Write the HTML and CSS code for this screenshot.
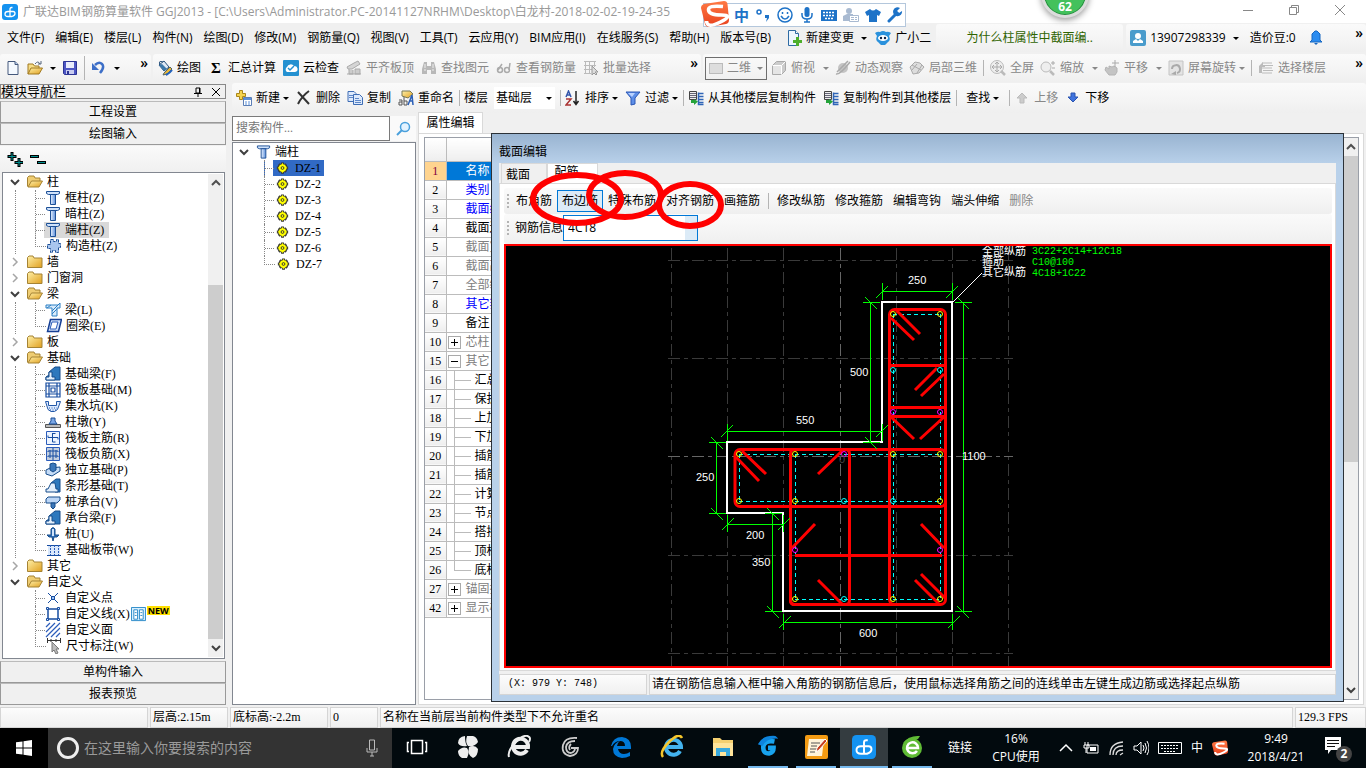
FILE: index.html
```html
<!DOCTYPE html>
<html lang="zh-CN">
<head>
  <meta charset="UTF-8">
  <meta name="viewport" content="width=device-width, initial-scale=1.0">
  <title>广联达BIM钢筋算量软件 GGJ2013</title>
  <link rel="stylesheet" href="styles.css">
</head>
<body>
  <svg class="symbols" aria-hidden="true">
    <defs>
      <linearGradient id="gold" x1="0" y1="0" x2="1" y2="1"><stop offset="0" stop-color="#fff0a8"/><stop offset="1" stop-color="#e0a020"/></linearGradient>
      <linearGradient id="steel-fill" x1="0" y1="0" x2="1" y2="0"><stop offset="0" stop-color="#eaf3ff"/><stop offset="1" stop-color="#5c8fdc"/></linearGradient>
      <linearGradient id="orange" x1="0" y1="0" x2="0" y2="1"><stop offset="0" stop-color="#ff7a45"/><stop offset="1" stop-color="#e8401c"/></linearGradient>
    </defs>
    <symbol id="app" viewBox="0 0 16 16"><rect width="16" height="16" rx="3" fill="#1492f0"/><path d="M10.500 3.500H9.500Q8 3.500 8 5v7.500M6 7.500h5q2 0 2 2t-3 3H6q-3 0-3-2.500t3-2.500" fill="none" stroke="#fff" stroke-width="1.300"/></symbol>
    <symbol id="doc" viewBox="0 0 16 16"><path d="M3 1.500h7l3 3v10H3z" fill="#f4f9ff" stroke="#44587c"/><path d="M10 1.500v3h3" fill="#b9cff0" stroke="#44587c"/></symbol>
    <symbol id="open" viewBox="0 0 16 16"><path d="M1 14V4h5l1.500 2H12v3" fill="#f6dd86" stroke="#a07820"/><path d="M1 14l3-6h11.500L12 14z" fill="url(#gold)" stroke="#a07820"/><path d="M8 4q3-4 5 0m-2 0h3V1" fill="none" stroke="#55657d"/></symbol>
    <symbol id="save" viewBox="0 0 16 16"><path d="M1.500 1.500h13v13h-12l-1-1z" fill="#4d56c4" stroke="#2c3494"/><path d="M4 2h8v6H4z" fill="#e9ecfb"/><path d="M4 10h8v4H4z" fill="#c9cdf0"/><path d="M5 11h2v3H5z" fill="#2c3494"/></symbol>
    <symbol id="undo" viewBox="0 0 16 16"><path d="M4 5q4-4 7-1t-2 9" fill="none" stroke="#3d6fc8" stroke-width="2.500"/><path d="M1 3v7h7z" fill="#3d6fc8"/></symbol>
    <symbol id="paint" viewBox="0 0 16 16"><path d="M2 5l5-4 5 6-5 4z" fill="#dfe9f5" stroke="#27507a"/><path d="M2 5l3-1 5 5-3 2z" fill="#3c78aa"/><path d="M3 5Q1 0 6 2" fill="none" stroke="#27507a"/><path d="M7 13l6-6 2 2-5 5-4 1z" fill="#e8b739" stroke="#566"/><path d="M9 15q4-2 6-5" stroke="#2463bd" stroke-width="2" fill="none"/></symbol>
    <symbol id="cloud" viewBox="0 0 16 16"><rect width="16" height="16" rx="1" fill="#2491d1"/><path d="M4 12a3 3 0 0 1 0-5 4 4 0 0 1 7-1 3 3 0 0 1 1 6z" fill="#fff"/><path d="M5 8l2 2 4-4" fill="none" stroke="#2491d1" stroke-width="1.500"/></symbol>
    <symbol id="slab" viewBox="0 0 16 16"><path d="M1 7l7-4 4-2 2 3-8 5H2z" fill="#d5d5d5" stroke="#aaa"/><path d="M3 9v5h4v-4m2 4V9h5v5zM1 14h14" fill="#ccc" stroke="#aaa"/></symbol>
    <symbol id="binoc" viewBox="0 0 16 16"><path d="M3 2h3v4h4V2h3l2 7v5h-5v-4H6v4H1V9z" fill="#b8b8b8"/><path d="M3 10h2m6 0h2M4 4v4m8-4v4" stroke="#eee"/></symbol>
    <symbol id="glasses" viewBox="0 0 16 16"><path d="M14 3l-1 7M6 4L2 10" stroke="#aaa" fill="none" stroke-width="1.500"/><circle cx="4" cy="10" r="2.500" fill="none" stroke="#aaa" stroke-width="1.500"/><circle cx="11" cy="10" r="2.500" fill="none" stroke="#aaa" stroke-width="1.500"/></symbol>
    <symbol id="batch" viewBox="0 0 16 16"><path d="M1 1.500h12M1 5.500h12M1 9.500h8M1 13.500h7M2.500 1v13M6.500 1v13M11.500 1v6" stroke="#bbb" fill="none"/><path d="M9 6v9l2-2 2 2 1-1-2-2h3z" fill="#ddd" stroke="#999"/></symbol>
    <symbol id="cube" viewBox="0 0 16 16"><path d="M1.500 5.500l4-4h9v9l-4 4h-9z" fill="#ccc" stroke="#aaa"/><path d="M1.500 5.500h9v9m0-9l4-4" fill="none" stroke="#fff"/><path d="M2 6h8v8H2z" fill="#e5e5e5"/></symbol>
    <symbol id="orbit" viewBox="0 0 16 16"><circle cx="8" cy="8" r="5" fill="#c4c4c4"/><path d="M1 14Q5 15 15 2M2 12L13 1" fill="none" stroke="#aaa" stroke-width="1.500"/></symbol>
    <symbol id="local3d" viewBox="0 0 16 16"><path d="M1 7l5-5 5 1 4 4-5 6-6 1z" fill="#ddd" stroke="#aaa"/><path d="M3 10l5-6m0 9l5-8M3 5l9 5" stroke="#aaa"/></symbol>
    <symbol id="full" viewBox="0 0 16 16"><circle cx="7" cy="7" r="6.500" fill="#eee" stroke="#bbb"/><path d="M7 2v10M2 7h10M5 4l2-2 2 2M5 10l2 2 2-2M4 5L2 7l2 2m6-4l2 2-2 2" fill="none" stroke="#aaa"/><path d="M11 11l4 4" stroke="#bbb" stroke-width="2.500"/></symbol>
    <symbol id="zoomer" viewBox="0 0 16 16"><circle cx="6" cy="7" r="5" fill="#eee" stroke="#bbb"/><path d="M10 11l4 4" stroke="#bbb" stroke-width="2.500"/><path d="M13 1v4m-2-2h4m-3 5h3" stroke="#aaa"/></symbol>
    <symbol id="hand" viewBox="0 0 16 16"><path d="M2 7l3 2V6l3 1 2-1 3 2v4l-2 3H5l-4-5z" fill="#c4c4c4" stroke="#b4b4b4"/><path d="M11 0v7M8 3h7" stroke="#aaa"/></symbol>
    <symbol id="rotate" viewBox="0 0 16 16"><path d="M1 1h14v14H1z" fill="#e4e4e4" stroke="#c4c4c4"/><path d="M4 9a4 4 0 1 1 5 4" fill="none" stroke="#aaa" stroke-width="2"/><path d="M3 14l5 1 0-4z" fill="#aaa"/></symbol>
    <symbol id="floors" viewBox="0 0 16 16"><path d="M4 3h10M5 5.500h10M4 8h10M5 10.500h10M4 13h10" stroke="#bbb"/><path d="M1 6l4-4v3h2v2H4v6H1z" fill="#bbb"/></symbol>
    <symbol id="add" viewBox="0 0 16 16"><path d="M3.500.500h3v3h3v3h-3v3h-3v-3h-3v-3h3z" fill="#f5d34e" stroke="#a9861b"/><path d="M7.500 7.500h8v8h-8z" fill="#fff" stroke="#5b7eb6"/><path d="M8 8h7v2H8z" fill="#5b8fd8"/><path d="M9 12h2m1 0h2m-5 2h2m1 0h2" stroke="#5b8fd8"/></symbol>
    <symbol id="del" viewBox="0 0 16 16"><path d="M2 2l11 12M13 1Q6 6 2 14" fill="none" stroke="#333" stroke-width="2"/></symbol>
    <symbol id="copy" viewBox="0 0 16 16"><path d="M1 1.500h6l2 2v8H1z" fill="#dce9fc" stroke="#3e6db5"/><path d="M6.500 4.500h6l3 3v7h-9z" fill="#dce9fc" stroke="#3e6db5"/><path d="M8 8.500h4M8 10.500h6M8 12.500h6M2 5.500h4M2 7.500h4" stroke="#5d87c8"/></symbol>
    <symbol id="rename" viewBox="0 0 16 16"><path d="M4 1l8 0 3 3-5 4-6-2z" fill="url(#gold)" stroke="#775"/><path d="M1 10h3v5H1v-3h3M6 7v8h3v-4H6" fill="none" stroke="#555"/><path d="M10 15l4-10 1 10m-4-4h4" fill="none" stroke="#2b5fb6" stroke-width="1.500"/></symbol>
    <symbol id="sort" viewBox="0 0 16 16"><path d="M1 7l2.500-6L6 7M2 5h3" fill="none" stroke="#3355aa" stroke-width="1.500"/><path d="M1 9h5l-5 6h5" fill="none" stroke="#a33" stroke-width="1.500"/><path d="M11 1v12M8.500 11l2.500 3.500 2.500-3.500" fill="none" stroke="#222" stroke-width="1.500"/></symbol>
    <symbol id="filter" viewBox="0 0 16 16"><path d="M1 2h14l-5 6v6l-4 1V8z" fill="#5e8fe8" stroke="#2b57b5"/><path d="M3 3h7L7 7z" fill="#b9d2ff"/></symbol>
    <symbol id="pull" viewBox="0 0 16 16"><path d="M1.500 1.500h7v8h-7z" fill="#eee" stroke="#444"/><path d="M2 3.500h6M2 5.500h6M2 7.500h6" stroke="#667"/><path d="M10.500 2.500v12h5M10.500 3.500h5m-5 3h5m-5 3h5m-5 3h5" fill="none" stroke="#2f65b7" stroke-width="1.500"/><path d="M3 10v3h3v2l4-3.500L6 9v1z" fill="#25a33a"/></symbol>
    <symbol id="up" viewBox="0 0 16 16"><path d="M8 3l5 5h-3v5H6V8H3z" fill="#ccc" stroke="#bbb"/></symbol>
    <symbol id="down" viewBox="0 0 16 16"><path d="M8 12l5-5h-3V3H6v4H3z" fill="#3f73de" stroke="#2b54b0"/></symbol>
    <symbol id="change" viewBox="0 0 16 16"><path d="M2.500.500h7l3 3v12h-10z" fill="#edf6ff" stroke="#2e6ba3"/><path d="M9.500.500v3h3" fill="#fff" stroke="#2e6ba3"/><path d="M10 7h3v3h3v3h-3v3h-3v-3H7v-3h3z" fill="#4daf2c"/></symbol>
    <symbol id="owl" viewBox="0 0 16 16"><path d="M0 3q3-2 5-1 3-2 6 0 2-1 5 1l-2 3q2 4-1 6l-3 3H6l-3-3Q0 10 2 6z" fill="#2a91dc"/><ellipse cx="8" cy="8" rx="5" ry="3" fill="#fff"/><circle cx="6" cy="8" r="1.200" fill="#124"/><circle cx="10" cy="8" r="1.200" fill="#124"/></symbol>
    <symbol id="user" viewBox="0 0 16 16"><rect width="16" height="16" rx="2" fill="#4a9ccc"/><circle cx="8" cy="6" r="3" fill="#fff"/><path d="M3 13v-2l3-2 2 2 2-2 3 2v2z" fill="#fff"/></symbol>
    <symbol id="bell" viewBox="0 0 16 16"><path d="M7 1h2l3 3v6l2 2H2l2-2V4z" fill="#2b8cf0" stroke="#1767c0"/><path d="M6 13h4l-2 2z" fill="#1767c0"/></symbol>
    <symbol id="folder" viewBox="0 0 16 16"><path d="M.500 13.500V3.500L2 2h4l1 2h8v9.500z" fill="url(#gold)" stroke="#a58334"/></symbol>
    <symbol id="folder-open" viewBox="0 0 16 16"><path d="M.500 12.500v-9L2 2h5l1 2h5v3" fill="#efcd73" stroke="#a58334"/><path d="M1 13l3.500-6h11L12 13z" fill="url(#gold)" stroke="#a58334"/></symbol>
    <symbol id="column" viewBox="0 0 16 16"><path d="M1.500 1.500h13v2l-2 1h-9l-2-1z" fill="#cfe2fb" stroke="#1c4f96"/><path d="M5.500 4.500h5v10h-5z" fill="url(#steel-fill)" stroke="#1c4f96"/></symbol>
    <symbol id="gzz" viewBox="0 0 16 16"><path d="M4.500 1.500h3v2h3v-2h2v4h2v4h-2v5h-3v-2h-3v2h-2v-4h-3v-4h3z" fill="#a9c6ef" stroke="#1c4f96" stroke-dasharray="3 1"/></symbol>
    <symbol id="beam" viewBox="0 0 16 16"><path d="M1 3h12l2-2v5h-3v8H7V6H1z" fill="#d9ebfb" stroke="#2b7fc4"/><path d="M2 6l4-3m1 6l6-6m-6 9l5-5" stroke="#2b7fc4"/></symbol>
    <symbol id="ring" viewBox="0 0 16 16"><path d="M4.500 1.500h11l-3 12h-11z" fill="#cfe0fa" stroke="#153f95" stroke-width="1.500"/><path d="M6 4h6l-2 7H4z" fill="#fff" stroke="#2c5dba"/></symbol>
    <symbol id="fbeam" viewBox="0 0 16 16"><path d="M1 14v-3l3-2V6l6-5h5v13z" fill="#2d78bd" stroke="#164c8b"/><path d="M1 14v-3h3V6h3v5h3v3z" fill="#e3effc" stroke="#164c8b"/></symbol>
    <symbol id="raft" viewBox="0 0 16 16"><path d="M1 1h14v14H1zM4 1v14M12 1v14M1 4h14M1 12h14M6 6h4v4H6z" fill="none" stroke="#164ca0" stroke-width="1.200"/></symbol>
    <symbol id="pit" viewBox="0 0 16 16"><path d="M.500 3.500h3v4h8v-4h4l-3 8-3 2H6l-3-2z" fill="#dceaff" stroke="#2358a8"/><path d="M4 10h8M5 12h6" stroke="#2358a8" stroke-dasharray="1 1.500"/></symbol>
    <symbol id="pier" viewBox="0 0 16 16"><path d="M0.500 10.500h15v3H.500z" fill="#bbb" stroke="#555"/><path d="M4 10l2-3V4h4v3l2 3z" fill="#7ba7e5" stroke="#1c4f96"/></symbol>
    <symbol id="rebar" viewBox="0 0 16 16"><path d="M1.500 1.500h13v13h-13z" fill="#edf4ff" stroke="#2c5dba"/><path d="M7.500 3v9h3M10.500 3.500h-3M3 7.500h10v2M3 7.500v-2" fill="none" stroke="#164ca0"/></symbol>
    <symbol id="rebar2" viewBox="0 0 16 16"><path d="M1.500 1.500h13v13h-13z" fill="#c4cfdf" stroke="#2c5dba"/><path d="M8 2v12M3 6V5h10v1M3 11v-1h10v1M5 4v8m6-8v8" fill="none" stroke="#164ca0"/></symbol>
    <symbol id="isolated" viewBox="0 0 16 16"><path d="M1 8l4-2 10-1v4l-8 5-6-2z" fill="#c5dcf7" stroke="#164c8b"/><path d="M5 2l3-1 3 1v6l-3 2-3-2z" fill="#3c78ba" stroke="#164c8b"/></symbol>
    <symbol id="strip" viewBox="0 0 16 16"><path d="M6 5l5-4h4v13h-5z" fill="#2d78bd" stroke="#164c8b"/><path d="M1 14v-3h2l3-6h4l1 6h2v3z" fill="#e3effc" stroke="#164c8b"/></symbol>
    <symbol id="cap" viewBox="0 0 16 16"><path d="M1 5l2-2h12v3l-3 3H1z" fill="#bcd6f6" stroke="#164c8b"/><path d="M6 9h4v4l-2 2-2-2z" fill="#3c78ba" stroke="#164c8b"/></symbol>
    <symbol id="pile" viewBox="0 0 16 16"><path d="M6 3q2-3 4 0v6h4l-2 2H9l-1 4-1-4H4L2 9h4z" fill="#2f70bb" stroke="#164c8b"/><path d="M7 3h2v7H7z" fill="#cfe3fb"/></symbol>
    <symbol id="band" viewBox="0 0 16 16"><path d="M2 3h12v10H2z" fill="#d9e8fc"/><path d="M1 3.500h14M1 13.500h14" stroke="#164ca0"/><path d="M4.500 3v10M8.500 3v10M12.500 3v10" stroke="#2c5dba" stroke-dasharray="2 1"/></symbol>
    <symbol id="cross" viewBox="0 0 16 16"><path d="M3 3l4 4 2 2 4 4M13 3L3 13" stroke="#164ca0" fill="none"/><path d="M6.500 6.500h3v3h-3z" fill="#9cc4f7" stroke="#164ca0"/></symbol>
    <symbol id="poly" viewBox="0 0 16 16"><path d="M3 3h10v10H3z" fill="none" stroke="#164ca0" stroke-width="1.500"/><path d="M1.500 1.500h2v2h-2zm11 0h2v2h-2zm-11 11h2v2h-2zm11 0h2v2h-2z" fill="#dbe9ff" stroke="#164ca0"/></symbol>
    <symbol id="hatch" viewBox="0 0 16 16"><path d="M1 5l4-4M1 10l9-9M1 15L15 1M6 15l9-9M11 15l4-4" stroke="#2c5dba" stroke-width="1.200"/></symbol>
    <symbol id="dim" viewBox="0 0 16 16"><path d="M1.500 0v5m13-5v5M2 2.500h12M5 1v3m5-3v3" stroke="#333"/><path d="M6 4v10l2-2 2 4 2-1-2-4h3z" fill="#bbb" stroke="#777"/></symbol>
    <symbol id="gear" viewBox="0 0 16 16"><path d="M8 2v12M2 8h12M4 4l8 8M12 4l-8 8" stroke="#333" stroke-width="3"/><circle cx="8" cy="8" r="4.500" fill="#ff0" stroke="#333" stroke-dasharray="2 1"/><path d="M8 3v10M3 8h10" stroke="#ff0"/><circle cx="8" cy="8" r="1.500" fill="#ff0" stroke="#333"/></symbol>
    <symbol id="lens" viewBox="0 0 16 16"><circle cx="10" cy="6" r="4.500" fill="#e4f3ff" stroke="#4aa0dc" stroke-width="1.500"/><path d="M7 9l-5 5" stroke="#4aa0dc" stroke-width="2"/></symbol>
    <symbol id="chev-down" viewBox="0 0 10 10"><path d="M1 3l4 4 4-4" fill="none" stroke="#404040" stroke-width="2"/></symbol>
    <symbol id="chev-up" viewBox="0 0 10 10"><path d="M1 7l4-4 4 4" fill="none" stroke="#505050" stroke-width="2"/></symbol>
    <symbol id="chev-right" viewBox="0 0 10 10"><path d="M3 1l4 4-4 4" fill="none" stroke="#a6a6a6" stroke-width="1.500"/></symbol>
    <symbol id="sogou" viewBox="0 0 28 28"><path d="M3 4L23 1q3 0 3.500 3L28 20q0 3-3 4L8 27q-3 0-4-3L0 8q0-3 3-4z" fill="url(#orange)"/><path d="M22 6.500Q7 5 7.500 10t13 5-1 7-14-1" fill="none" stroke="#fff" stroke-width="3.500"/></symbol>
    <symbol id="gball" viewBox="0 0 26 26"><path d="M20 7Q10 5 8 12q-1 8 6 8 5-1 5-6h-6" fill="none" stroke="#18a3ee" stroke-width="5"/><path d="M2 10Q7 0 21 1q2 1 3 3Q12 3 7 12z" fill="#0d84dc"/></symbol>
  </svg>

  <header class="titlebar">
    <svg class="icon"><use href="#app"/></svg>
    <h1>广联达BIM钢筋算量软件 GGJ2013 - [C:\Users\Administrator.PC-20141127NRHM\Desktop\白龙村-2018-02-02-19-24-35</h1>
    <div class="window-buttons">
      <button aria-label="最小化"><svg viewBox="0 0 12 12"><path d="M1 6.500h10"/></svg></button>
      <button aria-label="还原"><svg viewBox="0 0 12 12"><path d="M1.500 3.500h7v7h-7zM3.500 3V1.500h7v7H9"/></svg></button>
      <button aria-label="关闭"><svg viewBox="0 0 12 12"><path d="M1 1l10 10M11 1L1 11"/></svg></button>
    </div>
    <div class="ime-bar">
      <svg class="ime-logo"><use href="#sogou"/></svg>
      <b>中</b>
      <svg viewBox="0 0 16 16"><circle cx="4" cy="5" r="2" fill="none" stroke="#1e73c8" stroke-width="1.500"/><path d="M10 8h4v3l-3 4 1-4h-2z" fill="#1e73c8"/></svg>
      <svg viewBox="0 0 16 16"><circle cx="8" cy="8" r="7" fill="none" stroke="#1e73c8" stroke-width="1.500"/><path d="M5.500 5v2m5-2v2M4 9q4 6 8 0" fill="none" stroke="#1e73c8" stroke-width="1.500"/></svg>
      <svg viewBox="0 0 16 16"><rect x="5.500" y="0" width="5" height="10" rx="2.500" fill="#1e73c8"/><path d="M3 6v2q0 4 5 4t5-4V6M8 12v3m-3 0h6" fill="none" stroke="#1e73c8" stroke-width="1.500"/></svg>
      <svg viewBox="0 0 16 16"><path d="M0 3h16v11H0z" fill="#1e73c8"/><path d="M2 5.500h12M2 8.500h12M4 11.500h8" stroke="#fff" stroke-width="1.500" stroke-dasharray="2 1"/></svg>
      <svg viewBox="0 0 16 16"><circle cx="6" cy="4" r="3" fill="#a9bad1"/><path d="M0 14V9l4-2h6v7z" fill="#a9bad1"/><path d="M6.500 8.500h9v6h-9zM8 10.500h3m1 0h2m-6 2h3m1 0h2" fill="#fff" stroke="#a9bad1"/></svg>
      <svg viewBox="0 0 16 16"><path d="M5 2q3 3 6 0l5 3-2 4-2-1v7H4V8L2 9 0 5z" fill="#1e73c8"/></svg>
      <svg viewBox="0 0 16 16"><path d="M2 14l8-8" stroke="#1e73c8" stroke-width="3" stroke-linecap="round"/><path d="M13 1a4.500 4.500 0 1 0 2 3l-3 2-2-2z" fill="#1e73c8"/></svg>
    </div>
    <div class="ball">62</div>
  </header>

  <div class="menubar">
    <nav>
      <a href="#">文件(F)</a><a href="#">编辑(E)</a><a href="#">楼层(L)</a><a href="#">构件(N)</a><a href="#">绘图(D)</a><a href="#">修改(M)</a><a href="#">钢筋量(Q)</a><a href="#">视图(V)</a><a href="#">工具(T)</a><a href="#">云应用(Y)</a><a href="#">BIM应用(I)</a><a href="#">在线服务(S)</a><a href="#">帮助(H)</a><a href="#">版本号(B)</a>
    </nav>
    <button class="tool"><svg class="icon"><use href="#change"/></svg>新建变更<i class="caret"></i></button>
    <button class="tool"><svg class="icon"><use href="#owl"/></svg>广小二</button>
    <a class="bar tip" href="#">为什么柱属性中截面编..</a>
    <div class="bar account">
      <button class="tool"><svg class="icon"><use href="#user"/></svg>13907298339<i class="caret"></i></button>
      <span>造价豆:0</span>
      <svg class="icon"><use href="#bell"/></svg>
      <span class="more">»</span>
    </div>
  </div>

  <div class="toolbars">
    <div class="bar file-bar">
      <button class="tool" aria-label="新建"><svg class="icon"><use href="#doc"/></svg></button>
      <button class="tool" aria-label="打开"><svg class="icon"><use href="#open"/></svg><i class="caret"></i></button>
      <button class="tool" aria-label="保存"><svg class="icon"><use href="#save"/></svg></button>
      <span class="sep"></span>
      <button class="tool" aria-label="撤销"><svg class="icon"><use href="#undo"/></svg><i class="caret"></i></button>
      <span class="more">»</span>
    </div>
    <div class="bar draw-bar">
      <button class="tool"><svg class="icon"><use href="#paint"/></svg>绘图</button>
      <button class="tool"><b class="sigma">Σ</b>汇总计算</button>
      <button class="tool"><svg class="icon"><use href="#cloud"/></svg>云检查</button>
      <button class="tool off"><svg class="icon"><use href="#slab"/></svg>平齐板顶</button>
      <button class="tool off"><svg class="icon"><use href="#binoc"/></svg>查找图元</button>
      <button class="tool off"><svg class="icon"><use href="#glasses"/></svg>查看钢筋量</button>
      <button class="tool off"><svg class="icon"><use href="#batch"/></svg>批量选择</button>
      <span class="more">»</span>
    </div>
    <div class="bar view-bar">
      <button class="tool off mode"><span class="swatch"></span>二维<i class="caret"></i></button>
      <button class="tool off"><svg class="icon"><use href="#cube"/></svg>俯视<i class="caret wide"></i></button>
      <button class="tool off"><svg class="icon"><use href="#orbit"/></svg>动态观察</button>
      <button class="tool off"><svg class="icon"><use href="#local3d"/></svg>局部三维</button>
      <span class="sep"></span>
      <button class="tool off"><svg class="icon"><use href="#full"/></svg>全屏</button>
      <button class="tool off"><svg class="icon"><use href="#zoomer"/></svg>缩放<i class="caret wide"></i></button>
      <button class="tool off"><svg class="icon"><use href="#hand"/></svg>平移<i class="caret wide"></i></button>
      <button class="tool off"><svg class="icon"><use href="#rotate"/></svg>屏幕旋转<i class="caret"></i></button>
      <span class="sep"></span>
      <button class="tool off"><svg class="icon"><use href="#floors"/></svg>选择楼层</button>
      <span class="more">»</span>
    </div>
  </div>

  <main>
    <aside class="nav">
      <div class="nav-head">
        <h2>模块导航栏</h2>
        <button aria-label="固定"><svg viewBox="0 0 10 10"><path d="M3 1h4v5H3zM6.500 1v5M1 6.500h8M5 7v3" fill="none" stroke="#000"/></svg></button>
        <button aria-label="关闭"><svg viewBox="0 0 10 10"><path d="M1 1l8 8M9 1L1 9" stroke="#000"/></svg></button>
      </div>
      <button class="group">工程设置</button>
      <button class="group">绘图输入</button>
      <div class="nav-tools">
        <button aria-label="全部展开"><svg viewBox="0 0 16 16"><path d="M5 1v9M.500 5.500h9M12 7v9M7.500 11.500h9" stroke="#000" stroke-width="3"/><path d="M5 2v7M1.500 5.500h7M12 8v7M8.500 11.500h7" stroke="#009090"/></svg></button>
        <button aria-label="全部折叠"><svg viewBox="0 0 16 16"><path d="M0 5.500h9M7 11.500h9" stroke="#000" stroke-width="3"/><path d="M1 5.500h7M8 11.500h7" stroke="#009090"/></svg></button>
      </div>
      <div class="tree-box">
        <ul class="tree">
          <li><div class="node"><svg class="chev"><use href="#chev-down"/></svg><svg class="icon"><use href="#folder-open"/></svg>柱</div>
            <ul>
              <li><svg class="icon"><use href="#column"/></svg>框柱(Z)</li>
              <li><svg class="icon"><use href="#column"/></svg>暗柱(Z)</li>
              <li class="current"><svg class="icon"><use href="#column"/></svg>端柱(Z)</li>
              <li><svg class="icon"><use href="#gzz"/></svg>构造柱(Z)</li>
            </ul>
          </li>
          <li><div class="node"><svg class="chev"><use href="#chev-right"/></svg><svg class="icon"><use href="#folder"/></svg>墙</div></li>
          <li><div class="node"><svg class="chev"><use href="#chev-right"/></svg><svg class="icon"><use href="#folder"/></svg>门窗洞</div></li>
          <li><div class="node"><svg class="chev"><use href="#chev-down"/></svg><svg class="icon"><use href="#folder-open"/></svg>梁</div>
            <ul>
              <li><svg class="icon"><use href="#beam"/></svg>梁(L)</li>
              <li><svg class="icon"><use href="#ring"/></svg>圈梁(E)</li>
            </ul>
          </li>
          <li><div class="node"><svg class="chev"><use href="#chev-right"/></svg><svg class="icon"><use href="#folder"/></svg>板</div></li>
          <li><div class="node"><svg class="chev"><use href="#chev-down"/></svg><svg class="icon"><use href="#folder-open"/></svg>基础</div>
            <ul>
              <li><svg class="icon"><use href="#fbeam"/></svg>基础梁(F)</li>
              <li><svg class="icon"><use href="#raft"/></svg>筏板基础(M)</li>
              <li><svg class="icon"><use href="#pit"/></svg>集水坑(K)</li>
              <li><svg class="icon"><use href="#pier"/></svg>柱墩(Y)</li>
              <li><svg class="icon"><use href="#rebar"/></svg>筏板主筋(R)</li>
              <li><svg class="icon"><use href="#rebar2"/></svg>筏板负筋(X)</li>
              <li><svg class="icon"><use href="#isolated"/></svg>独立基础(P)</li>
              <li><svg class="icon"><use href="#strip"/></svg>条形基础(T)</li>
              <li><svg class="icon"><use href="#cap"/></svg>桩承台(V)</li>
              <li><svg class="icon"><use href="#fbeam"/></svg>承台梁(F)</li>
              <li><svg class="icon"><use href="#pile"/></svg>桩(U)</li>
              <li><svg class="icon"><use href="#band"/></svg>基础板带(W)</li>
            </ul>
          </li>
          <li><div class="node"><svg class="chev"><use href="#chev-right"/></svg><svg class="icon"><use href="#folder"/></svg>其它</div></li>
          <li><div class="node"><svg class="chev"><use href="#chev-down"/></svg><svg class="icon"><use href="#folder-open"/></svg>自定义</div>
            <ul class="last">
              <li><svg class="icon"><use href="#cross"/></svg>自定义点</li>
              <li><svg class="icon"><use href="#poly"/></svg>自定义线(X)<svg class="video" viewBox="0 0 16 16"><path d="M.500.500h15v14H.500z" fill="#d8f0ff" stroke="#2787c8"/><path d="M3 3h4v10H3zm6 0h4v10H9z" fill="#fff" stroke="#2787c8"/><path d="M4 6h2m-2 3h2m4-3h2m-2 3h2" stroke="#2787c8"/></svg><b class="new">NEW</b></li>
              <li><svg class="icon"><use href="#hatch"/></svg>自定义面</li>
              <li><svg class="icon"><use href="#dim"/></svg>尺寸标注(W)</li>
            </ul>
          </li>
        </ul>
        <div class="scroll nav-scroll"><svg><use href="#chev-up"/></svg><div class="thumb"></div><svg><use href="#chev-down"/></svg></div>
      </div>
      <button class="group">单构件输入</button>
      <button class="group">报表预览</button>
    </aside>

    <section class="work">
      <div class="bar edit-bar">
        <button class="tool"><svg class="icon"><use href="#add"/></svg>新建<i class="caret"></i></button>
        <button class="tool"><svg class="icon"><use href="#del"/></svg>删除</button>
        <button class="tool"><svg class="icon"><use href="#copy"/></svg>复制</button>
        <button class="tool"><svg class="icon"><use href="#rename"/></svg>重命名</button>
        <span class="sep"></span>
        <label class="floor">楼层<select><option>基础层</option></select><i class="caret"></i></label>
        <span class="sep"></span>
        <button class="tool"><svg class="icon"><use href="#sort"/></svg>排序<i class="caret"></i></button>
        <button class="tool"><svg class="icon"><use href="#filter"/></svg>过滤<i class="caret"></i></button>
        <span class="sep"></span>
        <button class="tool"><svg class="icon"><use href="#pull"/></svg>从其他楼层复制构件</button>
        <button class="tool"><svg class="icon"><use href="#pull"/></svg>复制构件到其他楼层</button>
        <span class="sep"></span>
        <button class="tool find">查找<i class="caret"></i></button>
        <span class="sep"></span>
        <button class="tool off"><svg class="icon"><use href="#up"/></svg>上移</button>
        <button class="tool"><svg class="icon"><use href="#down"/></svg>下移</button>
      </div>

      <div class="panes">
        <div class="members">
          <div class="search">
            <input type="text" placeholder="搜索构件..." aria-label="搜索构件">
            <button aria-label="搜索"><svg class="icon"><use href="#lens"/></svg></button>
          </div>
          <ul class="tree member-tree">
            <li><div class="node"><svg class="chev"><use href="#chev-down"/></svg><svg class="icon"><use href="#column"/></svg>端柱</div>
              <ul class="last">
                <li class="picked"><svg class="icon"><use href="#gear"/></svg>DZ-1</li>
                <li><svg class="icon"><use href="#gear"/></svg>DZ-2</li>
                <li><svg class="icon"><use href="#gear"/></svg>DZ-3</li>
                <li><svg class="icon"><use href="#gear"/></svg>DZ-4</li>
                <li><svg class="icon"><use href="#gear"/></svg>DZ-5</li>
                <li><svg class="icon"><use href="#gear"/></svg>DZ-6</li>
                <li><svg class="icon"><use href="#gear"/></svg>DZ-7</li>
              </ul>
            </li>
          </ul>
        </div>

        <div class="props">
          <button class="prop-tab">属性编辑</button>
          <div class="prop-page">
            <div class="prop-box">
              <table>
                <colgroup><col class="num-col"><col></colgroup>
                <thead><tr><th></th><td></td></tr></thead>
                <tbody>
                  <tr class="active"><th>1</th><td>名称</td></tr>
                  <tr class="key"><th>2</th><td>类别</td></tr>
                  <tr class="key"><th>3</th><td>截面编</td></tr>
                  <tr><th>4</th><td>截面边</td></tr>
                  <tr class="dim"><th>5</th><td>截面宽</td></tr>
                  <tr class="dim"><th>6</th><td>截面高</td></tr>
                  <tr class="dim"><th>7</th><td>全部纵</td></tr>
                  <tr class="key"><th>8</th><td>其它箍</td></tr>
                  <tr><th>9</th><td>备注</td></tr>
                  <tr class="dim head"><th>10</th><td><button aria-label="展开"><svg viewBox="0 0 11 11"><path d="M2 5.500h7M5.500 2v7"/></svg></button>芯柱</td></tr>
                  <tr class="dim head"><th>15</th><td><button aria-label="折叠"><svg viewBox="0 0 11 11"><path d="M2 5.500h7"/></svg></button>其它</td></tr>
                  <tr class="sub"><th>16</th><td>汇总</td></tr>
                  <tr class="sub"><th>17</th><td>保护</td></tr>
                  <tr class="sub"><th>18</th><td>上加</td></tr>
                  <tr class="sub"><th>19</th><td>下加</td></tr>
                  <tr class="sub"><th>20</th><td>插筋</td></tr>
                  <tr class="sub"><th>21</th><td>插筋</td></tr>
                  <tr class="sub"><th>22</th><td>计算</td></tr>
                  <tr class="sub"><th>23</th><td>节点</td></tr>
                  <tr class="sub"><th>24</th><td>搭接</td></tr>
                  <tr class="sub"><th>25</th><td>顶标</td></tr>
                  <tr class="sub end"><th>26</th><td>底标</td></tr>
                  <tr class="dim head"><th>27</th><td><button aria-label="展开"><svg viewBox="0 0 11 11"><path d="M2 5.500h7M5.500 2v7"/></svg></button>锚固搭</td></tr>
                  <tr class="dim head"><th>42</th><td><button aria-label="展开"><svg viewBox="0 0 11 11"><path d="M2 5.500h7M5.500 2v7"/></svg></button>显示样</td></tr>
                </tbody>
              </table>
              <div class="scroll prop-scroll"><svg><use href="#chev-up"/></svg><div class="thumb"></div><svg><use href="#chev-down"/></svg></div>
            </div>
          </div>

          <div class="dialog" role="dialog" aria-label="截面编辑">
            <h2>截面编辑</h2>
            <div class="dialog-body">
              <div class="tabs"><button>截面</button><button class="on">配筋</button></div>
              <div class="page">
                <div class="bar steel-bar">
                  <span class="grip"></span>
                  <button>布角筋</button><button class="on">布边筋</button><button>特殊布筋</button><button>对齐钢筋</button><button>画箍筋</button>
                  <span class="sep"></span>
                  <button>修改纵筋</button><button>修改箍筋</button><button>编辑弯钩</button><button>端头伸缩</button><button disabled>删除</button>
                </div>
                <div class="bar info-bar">
                  <span class="grip"></span>
                  <label for="steel">钢筋信息</label>
                  <select id="steel"><option>4C18</option></select>
                </div>
                <div class="canvas">
                  <svg viewBox="506 246 824 420">
                    <g class="grid">
                      <path d="M671.500 248V666M727.500 248V666M783.500 248V666M896.500 248V666M952.500 248V666M1008.500 248V666M668 260.500H1013M668 358.500H1013M668 555.500H1013M668 653.500H1013"/>
                      <path class="axis" d="M840.500 248V666M668 456.500H1013"/>
                    </g>
                    <path class="outline" d="M882 302H952V611H783V513H727V442H882z"/>
                    <path class="dash" d="M893.500 314V599M940.500 314V599M893 314.500H940M739 454.500H940M739 501.500H940M739.500 454V501M795.500 454V599M795 599.500H940"/>
                    <g class="stirrup">
                      <rect x="889.500" y="309.500" width="56" height="295" rx="5"/>
                      <rect x="735" y="449.500" width="210.500" height="57" rx="5"/>
                      <rect x="790.500" y="449.500" width="59" height="155" rx="4"/>
                      <path d="M790.500 555.500V600q0 4.500 4 4.500H941M795 555.500H942M891 365.500H944M891 407.500H944M891 416.500H944"/>
                      <path d="M891 318l23 22M896 310l24 24M937 368l-22 22M944 374l-23 22M891 417l23 22M944 417l-24 22M736 457l23 24M742 451l24 23M842 451l-24 23M792 548l23-24M944 548l-23-24M818 580l24 24M915 580l24 24M921 574l24 24"/>
                    </g>
                    <g class="bars">
                      <g stroke="#ff0"><circle cx="893" cy="314" r="2.500"/><circle cx="940" cy="314" r="2.500"/><circle cx="739" cy="454" r="2.500"/><circle cx="795" cy="454" r="2.500"/><circle cx="893" cy="454" r="2.500"/><circle cx="940" cy="454" r="2.500"/><circle cx="739" cy="501" r="2.500"/><circle cx="795" cy="501" r="2.500"/><circle cx="940" cy="501" r="2.500"/><circle cx="795" cy="599" r="2.500"/><circle cx="893" cy="599" r="2.500"/><circle cx="940" cy="599" r="2.500"/></g>
                      <g stroke="#0ff"><circle cx="893" cy="370" r="2.500"/><circle cx="940" cy="370" r="2.500"/><circle cx="844" cy="501" r="2.500"/><circle cx="893" cy="501" r="2.500"/><circle cx="844" cy="599" r="2.500"/></g>
                      <g stroke="#f0f"><circle cx="893" cy="412" r="2.500"/><circle cx="940" cy="412" r="2.500"/><circle cx="844" cy="454" r="2.500"/><circle cx="795" cy="550" r="2.500"/><circle cx="940" cy="550" r="2.500"/></g>
                    </g>
                    <g class="dims">
                      <path d="M882.500 291.500H952.500M882.500 283v17M952.500 283v17M876 298l12-12M946 298l12-12"/>
                      <path d="M870.500 302.500V442.500M863 302.500h17M863 442.500h17M865 297l12 12M865 437l12 12"/>
                      <path d="M963.500 302.500V611.500M955 302.500h17M955 611.500h17M957 297l12 12M957 606l12 12"/>
                      <path d="M727.500 431.500H882.500M727.500 424v17M882.500 424v17M721 437l12-12M876 437l12-12"/>
                      <path d="M716.500 442.500V513.500M709 442.500h17M709 513.500h17M711 437l12 12M711 508l12 12"/>
                      <path d="M727.500 524.500H783.500M727.500 515v17M783.500 515v17M722 530l12-12M778 530l12-12"/>
                      <path d="M772.500 513.500V611.500M765 513.500h17M765 611.500h17M767 508l12 12M767 606l12 12"/>
                      <path d="M783.500 622.500H952.500M783.500 614v16M952.500 614v16M779 628l12-12M948 628l12-12"/>
                    </g>
                    <path d="M953 302l29-29" stroke="#fff"/>
                    <g class="nums">
                      <text x="908" y="284">250</text><text x="850" y="376">500</text><text x="796" y="424">550</text><text x="696" y="481">250</text>
                      <text x="746" y="539">200</text><text x="752" y="566">350</text><text x="859" y="637">600</text><text x="962" y="460">1100</text>
                      <text class="zero" x="839" y="463">0</text>
                      <text x="982" y="255">全部纵筋</text><text x="982" y="265">箍筋</text><text x="982" y="276">其它纵筋</text>
                    </g>
                    <g class="spec"><text x="1032" y="254">3C22+2C14+12C18</text><text x="1032" y="265">C10@100</text><text x="1032" y="276">4C18+1C22</text></g>
                  </svg>
                </div>
              </div>
              <div class="dialog-status"><span>(X: 979 Y: 748)</span><span>请在钢筋信息输入框中输入角筋的钢筋信息后，使用鼠标选择角筋之间的连线单击左键生成边筋或选择起点纵筋</span></div>
            </div>
            <svg class="marks" viewBox="491 133 240 110"><ellipse cx="577" cy="199" rx="44" ry="24"/><ellipse cx="625" cy="195" rx="36" ry="22"/><ellipse cx="690" cy="205" rx="31" ry="21"/></svg>
          </div>
        </div>
      </div>
    </section>
  </main>

  <div class="statusbar"><span></span><span>层高:2.15m</span><span>底标高:-2.2m</span><span>0</span><span>名称在当前层当前构件类型下不允许重名</span><span>129.3 FPS</span></div>

  <footer class="taskbar">
    <button class="start" aria-label="开始"><svg viewBox="0 0 16 16"><path d="M0 2.300l6.500-.900v6.100H0zM7.500 1.200L16 0v7.500H7.500zM0 8.500h6.500v6.100L0 13.700zM7.500 8.500H16V16l-8.500-1.200z" fill="#fff"/></svg></button>
    <div class="cortana"><span class="circle"></span><input type="text" placeholder="在这里输入你要搜索的内容" aria-label="搜索"><svg viewBox="0 0 16 18"><path d="M5.500 1h5v10h-5zM3 9v4h10V9M8 13v4m-2 0h4" fill="none" stroke="#bbb"/></svg></div>
    <button class="task" aria-label="任务视图"><svg viewBox="0 0 24 24"><path d="M6.500 5.500h11v13h-11zM4 7.500H2.500v9H4M20 7.500h1.500v9H20" fill="none" stroke="#fff" stroke-width="1.500"/></svg></button>
    <button class="task" aria-label="风车"><svg viewBox="0 0 24 24"><path d="M12 11Q9 7 11 1h6q4 1 5 6-3 5-10 4zM13 12q6-3 9 2 0 7-5 9-6-3-4-11zM11 13q3 4 0 10H6q-4-2-4-7 4-5 9-3zM11 11Q4 12 2 8q0-6 7-7 0 7 2 10z" fill="#eee"/></svg></button>
    <button class="task" aria-label="浏览器"><svg viewBox="0 0 24 24"><path d="M20 15a7.500 7.500 0 1 1 1-3H6" fill="none" stroke="#eee" stroke-width="4"/><path d="M2 22Q0 16 9 7T22 2q2 1 0 5" fill="none" stroke="#eee" stroke-width="2"/></svg></button>
    <button class="task" aria-label="GG"><svg viewBox="0 0 24 24"><path d="M19 3Q7 2 5 10q-2 9 7 11 8-1 8-8h-7m4-7Q9 6 8 12q0 6 5 6 4-1 4-5M13 9q-3 3-1 6" fill="none" stroke="#ccc" stroke-width="1.800"/></svg></button>
    <button class="task" aria-label="Edge"><svg viewBox="0 0 24 24"><path d="M2 11Q4 2 13 2q9 1 9 10v2H9q1 5 6 5 3 0 6-2v4q-4 2-8 2-9-1-9-9 1-6 7-8-3 2-3 5h8q0-5-5-5-5 0-8 5z" fill="#0078d7"/></svg></button>
    <button class="task" aria-label="IE"><svg viewBox="0 0 24 24"><path d="M20 16a7.500 7.500 0 1 1 1-4H6" fill="none" stroke="#43b3ee" stroke-width="4"/><path d="M3 22Q-1 17 9 7T22 3" fill="none" stroke="#f5c62c" stroke-width="2.500"/></svg></button>
    <button class="task" aria-label="文件资源管理器"><svg viewBox="0 0 24 24"><path d="M2 3h7l2 2h11v16H2z" fill="#f5d070"/><path d="M2 8h20v13H2z" fill="#ffe49a"/><path d="M5 21v-8h14v8h-4v-4H9v4z" fill="#39a9dd"/></svg></button>
    <button class="task run" aria-label="广联达"><svg viewBox="0 0 26 26"><use href="#gball"/></svg></button>
    <button class="task run" aria-label="编辑器"><svg viewBox="0 0 24 24"><rect x="1" width="23" height="24" rx="2" fill="#f39b13"/><path d="M5 4h15l-2 17H3z" fill="#fff3d8"/><path d="M7 8h9M7 11h6m-7 3h7m-7 3h5" stroke="#555"/><path d="M12 17l1-4 8-9 2 2-8 9z" fill="#c63e1c" stroke="#fff"/></svg></button>
    <button class="task run active" aria-label="钢筋算量"><svg viewBox="0 0 16 16"><use href="#app"/></svg></button>
    <button class="task run" aria-label="360浏览器"><svg viewBox="0 0 24 24"><circle cx="12" cy="13" r="10" fill="#60bb35"/><path d="M17 16a5.500 5.500 0 1 1 1-3H7" fill="none" stroke="#fff" stroke-width="2.500"/><path d="M3 8Q9 0 20 1l-2 3" fill="#60bb35"/></svg></button>
    <span class="links">链接</span>
    <span class="cpu">16%<br>CPU使用</span>
    <div class="tray">
      <svg viewBox="0 0 16 16"><path d="M2 11l6-6 6 6" fill="none" stroke="#fff" stroke-width="1.500"/></svg>
      <svg viewBox="0 0 16 16"><path d="M4 5h11v8H4zM2 2v3m3-3v3M1 5h5v3H1zM3 8v5" fill="none" stroke="#fff"/><path d="M7 7h6v4H7z" fill="#fff"/></svg>
      <svg viewBox="0 0 16 16"><path d="M2 15Q2 3 15 2M5 15q0-9 10-9M8 15q0-5 7-5M12 15l3-2" fill="none" stroke="#ddd" stroke-width="1.300"/></svg>
      <svg viewBox="0 0 16 16"><path d="M1 6h3l4-4v12l-4-4H1zM10 5q2 3 0 6m2-8q3 5 0 10m2-12q4 7 0 14" fill="none" stroke="#fff"/></svg>
      <svg class="kb" viewBox="0 0 24 16"><path d="M.500 2.500h23v11H.500z" fill="none" stroke="#fff"/><path d="M3 5.500h18M3 8.500h18M6 11.500h12" stroke="#fff" stroke-dasharray="2 1"/></svg>
      <span>中</span>
      <svg viewBox="0 0 28 28"><use href="#sogou"/></svg>
    </div>
    <time class="clock">9:49<br>2018/4/21</time>
    <button class="notes" aria-label="通知"><svg viewBox="0 0 24 24"><path d="M1 1h16v13H7l-3 4v-4H1z" fill="#fff"/><path d="M3 4.500h12M3 7.500h12M3 10.500h8" stroke="#111"/></svg><b>2</b></button>
  </footer>
</body>
</html>
```

FILE: styles.css
```css
* {
  box-sizing: border-box;
}

body {
  margin: 0;
  height: 100vh;
  display: flex;
  flex-direction: column;
  overflow: hidden;
  background: #f0f0f0;
  color: #000;
  font: 12px/16px "Open Sans", "Noto Sans CJK SC", sans-serif;
}

button, input, select {
  font: inherit;
  color: inherit;
  margin: 0;
  padding: 0;
  border: none;
  background: none;
}

select {
  appearance: none;
}

a {
  color: inherit;
  text-decoration: none;
}

h1, h2 {
  margin: 0;
  font: inherit;
}

ul {
  list-style: none;
  margin: 0;
  padding: 0;
}

.symbols {
  position: absolute;
  width: 0;
  height: 0;
}

.icon {
  width: 16px;
  height: 16px;
  flex: none;
}

/* title bar */
.titlebar {
  position: relative;
  z-index: 5;
  flex: none;
  height: 23px;
  display: flex;
  align-items: center;
  gap: 5px;
  padding-left: 2px;
  background: #fff;
  color: #999;
}

.titlebar h1 {
  flex: 1;
  white-space: nowrap;
}

.window-buttons {
  display: flex;
  gap: 34px;
  padding: 0 20px 4px 0;
}

.window-buttons button {
  width: 12px;
  height: 12px;
}

.window-buttons svg {
  display: block;
  fill: none;
  stroke: #888;
}

.ime-bar {
  position: absolute;
  left: 703px;
  top: 3px;
  height: 24px;
  display: flex;
  align-items: center;
  gap: 6px;
  padding: 0 2px 0 30px;
  border: 1px solid #b4c7dc;
  background: #fff;
  color: #1e73c8;
}

.ime-bar b {
  font-size: 15px;
}

.ime-bar svg {
  width: 16px;
  height: 16px;
}

.ime-bar .ime-logo {
  position: absolute;
  left: -3px;
  top: -4px;
  width: 28px;
  height: 28px;
}

.ball {
  position: absolute;
  left: 1041px;
  top: -30px;
  width: 48px;
  height: 48px;
  padding-top: 26px;
  border: 3px solid #dcdcdc;
  border-radius: 50%;
  background: #43c15c;
  box-shadow: inset 0 0 0 1px #258a3e, 0 2px 6px #999;
  color: #fff;
  font-weight: bold;
  text-align: center;
}

/* menus and toolbars */
.bar {
  display: flex;
  align-items: center;
  border-radius: 3px;
  background: linear-gradient(#fafafa, #f4f4f4 60%, #efefef);
}

.menubar {
  flex: none;
  height: 30px;
  display: flex;
  align-items: center;
  gap: 5px;
  white-space: nowrap;
}

.menubar nav {
  display: flex;
  gap: 11px;
  padding: 0 10px 0 7px;
}

.tool {
  display: flex;
  align-items: center;
  gap: 4px;
  white-space: nowrap;
}

.tool.off {
  color: #888;
}

.caret {
  border: 3px solid transparent;
  border-top-color: currentColor;
  border-bottom: none;
}

.tool > .caret {
  margin-left: -1px;
}

.menubar .caret {
  margin: 0 3px;
}

.more {
  margin-left: auto;
  padding: 0 3px 10px 0;
  color: #000;
  font-size: 14px;
  font-weight: 600;
}

.sep {
  width: 1px;
  height: 16px;
  background: #b4b4b4;
}

.tip {
  width: 187px;
  height: 28px;
  justify-content: center;
  color: #2f6400;
}

.account {
  flex: 1;
  height: 28px;
  gap: 12px;
  padding-left: 4px;
  margin-left: -2px;
}

.account .tool {
  margin-right: -4px;
}

.toolbars {
  flex: none;
  height: 30px;
  display: flex;
  gap: 2px;
  padding: 1px 0;
}

.file-bar {
  width: 151px;
  gap: 6px;
  padding-left: 5px;
}

.file-bar .tool {
  gap: 8px;
}

.file-bar .sep {
  height: 24px;
}

.draw-bar {
  flex: 1;
  gap: 7px;
  padding-left: 4px;
}

.sigma {
  width: 16px;
  font: bold 15px/16px "Liberation Serif", serif;
}

.view-bar {
  flex: none;
  width: 663px;
  gap: 6px;
  padding-left: 2px;
}

.mode {
  height: 23px;
  width: 62px;
  padding: 0 3px;
  margin-right: -2px;
  border: 1px solid #6e6e6e;
}

.mode .caret {
  margin-left: auto;
}

.swatch {
  width: 14px;
  height: 11px;
  border: 1px solid #bbb;
  background: #ddd;
}

.view-bar .wide {
  margin-left: 4px;
}

/* left navigator */
main {
  flex: 1;
  min-height: 0;
  display: flex;
  gap: 5px;
  font-family: "Liberation Serif", "Noto Sans CJK SC", serif;
}

.nav {
  flex: none;
  width: 227px;
  display: flex;
  flex-direction: column;
  padding: 1px 1px 2px 0;
}

.nav-head {
  flex: none;
  height: 15px;
  display: flex;
  align-items: center;
  gap: 8px;
  padding-right: 4px;
  border: 1px solid #888;
  margin-bottom: 2px;
}

.nav-head h2 {
  flex: 1;
  font-size: 13px;
  line-height: 13px;
}

.nav-head svg {
  display: block;
  width: 10px;
  height: 10px;
}

.group {
  flex: none;
  height: 22px;
  border: 1px solid #999;
  border-top-color: #bbb;
  background: #f0f0f0;
}

.nav-tools {
  flex: none;
  height: 26px;
  margin-top: 1px;
  display: flex;
  align-items: center;
  gap: 7px;
  padding-left: 7px;
  background: linear-gradient(#fafafa, #f0f0f0);
}

.nav-tools svg {
  display: block;
  width: 16px;
  height: 16px;
}

.tree-box {
  flex: 1;
  min-height: 0;
  display: flex;
  justify-content: space-between;
  margin: 0 1px 2px 2px;
  padding: 1px;
  border: 1px solid #828790;
  background: #fff;
}

.tree {
  white-space: nowrap;
}

.tree .node {
  height: 16px;
  display: flex;
  align-items: center;
  padding-left: 6px;
}

.node .chev {
  width: 10px;
  height: 10px;
  margin-right: 7px;
}

.node .icon {
  margin-right: 4px;
}

.tree ul {
  margin-left: 11px;
  padding-left: 19px;
  border-left: 1px dotted #888;
}

.tree ul.last {
  border-left-color: transparent;
}

.tree ul li {
  width: max-content;
  height: 16px;
  display: flex;
  align-items: center;
  gap: 4px;
  border-left: 1px dotted #888;
}

.tree ul li::before {
  content: "";
  width: 9px;
  height: 8px;
  margin-right: -4px;
  align-self: flex-start;
  border-bottom: 1px dotted #888;
}

.tree ul li:last-child {
  border-left: none;
}

.tree ul li:last-child::before {
  width: 10px;
  border-left: 1px dotted #888;
}

.tree .current {
  padding-right: 5px;
  background: linear-gradient(to right, #fff 8px, #d9d9d9 8px);
}

.video {
  width: 15px;
  height: 15px;
  margin-left: -3px;
}

.new {
  align-self: flex-start;
  margin-left: -3px;
  padding: 0 1px;
  background: #ffe000;
  font: bold 9px/9px "Open Sans", sans-serif;
}

.scroll {
  flex: none;
  width: 15px;
  display: flex;
  flex-direction: column;
  align-items: center;
  background: #f0f0f0;
}

.scroll svg {
  width: 10px;
  height: 10px;
  margin: 4px 0;
}

.thumb {
  width: 15px;
  background: #cdcdcd;
}

.nav-scroll .thumb {
  flex: 1;
  margin-top: 93px;
}

/* work area */
.work {
  flex: 1;
  min-width: 0;
  display: flex;
  flex-direction: column;
}

.edit-bar {
  flex: none;
  height: 30px;
  gap: 7px;
  padding-left: 4px;
  font-family: "Open Sans", "Noto Sans CJK SC", sans-serif;
}

.edit-bar .sep {
  margin: 0 -3px 0 -2px;
}

.edit-bar .find {
  padding: 0 5px;
}

.floor {
  position: relative;
  display: flex;
  align-items: center;
  gap: 6px;
}

.floor select {
  width: 61px;
  height: 22px;
  padding-left: 2px;
  background: #fff;
}

.floor .caret {
  position: absolute;
  right: 3px;
  top: 10px;
  pointer-events: none;
}

.panes {
  flex: 1;
  min-height: 0;
  display: flex;
  gap: 2px;
}

.members {
  flex: none;
  width: 184px;
  display: flex;
  flex-direction: column;
  padding: 3px 0 2px;
}

.search {
  display: flex;
  padding-bottom: 1px;
}

.search input {
  width: 158px;
  height: 25px;
  padding: 0 3px;
  border: 1px solid #7a7a7a;
  background: #fff;
}

.search input::placeholder {
  color: #777;
  opacity: 1;
}

.search button {
  flex: 1;
  display: flex;
  align-items: center;
  justify-content: center;
  background: #fafafa;
}

.member-tree {
  flex: 1;
  padding-top: 1px;
  border: 1px solid #828790;
  background: #fff;
}

.member-tree ul li {
  gap: 5px;
  padding-right: 3px;
}

.member-tree .icon {
  width: 15px;
}

.member-tree .picked {
  background: linear-gradient(to right, #fff 8px, #316ac5 8px);
}

/* properties */
.props {
  position: relative;
  flex: 1;
  min-width: 0;
  display: flex;
  flex-direction: column;
  padding: 0 2px 2px 0;
}

.prop-tab {
  align-self: flex-start;
  height: 21px;
  width: 65px;
  margin-top: -1px;
  border: 1px solid #d9d9d9;
  border-bottom: none;
  background: #fff;
}

.prop-page {
  flex: 1;
  min-height: 0;
  display: flex;
  padding: 3px 4px 4px 5px;
  border: 1px solid #d9d9d9;
  background: #fff;
}

.prop-box {
  flex: 1;
  display: flex;
  border: 1px solid #9a9fa8;
}

.props table {
  flex: 1;
  width: 100%;
  align-self: flex-start;
  table-layout: fixed;
  border-collapse: collapse;
}

.num-col {
  width: 21px;
}

.props tr {
  height: 19px;
}

.props thead tr {
  height: 23px;
}

.props th, .props td {
  padding: 0;
  border-right: 1px solid #bcbcbc;
  border-bottom: 1px solid #bcbcbc;
  font-weight: normal;
  line-height: 16px;
}

.props th, .props thead td {
  background: linear-gradient(#fff, #eee);
  text-align: center;
}

.props tbody td {
  padding-left: 19px;
}

.props .active th {
  background: #ffd48f;
  color: #800040;
}

.props .active td {
  background: #0078d7;
  color: #fff;
}

.key td {
  color: #00f;
}

.dim td {
  color: #808080;
}

.props .head td {
  padding-left: 1px;
}

.head button {
  width: 13px;
  height: 13px;
  margin-right: 5px;
  border: 1px solid #aaa;
  background: #fff;
  vertical-align: middle;
}

.head svg {
  display: block;
  width: 11px;
  height: 11px;
  stroke: #000;
}

.props .sub td {
  padding-left: 28px;
  background: linear-gradient(#bbb, #bbb) 7px 0 / 1px 100% no-repeat, linear-gradient(#bbb, #bbb) 7px 9px / 17px 1px no-repeat;
}

.props .end td {
  background-size: 1px 9px, 17px 1px;
}

.prop-scroll .thumb {
  flex: 1;
  margin-bottom: 219px;
}

/* section editor */
.dialog {
  position: absolute;
  left: 73px;
  right: 22px;
  top: 20px;
  bottom: 5px;
  display: flex;
  flex-direction: column;
  padding: 0 7px 6px;
  border: 1px solid #2b3137;
  background: linear-gradient(#99b4d1, #b9d1ea 30px);
}

.dialog h2 {
  height: 29px;
  padding-top: 10px;
}

.dialog-body {
  flex: 1;
  min-height: 0;
  display: flex;
  flex-direction: column;
  background: #f0f0f0;
}

.tabs {
  display: flex;
  height: 20px;
  padding-left: 2px;
}

.tabs button {
  width: 46px;
  padding: 3px 12px 0 0;
  border: 1px solid #d9d9d9;
  border-bottom: none;
}

.tabs .on {
  width: 51px;
  padding: 0 12px 3px 0;
  background: #fff;
}

.page {
  flex: 1;
  min-height: 0;
  display: flex;
  flex-direction: column;
  padding: 4px 3px 2px 4px;
  border: 1px solid #d9d9d9;
  background: #fff;
}

.steel-bar, .info-bar {
  flex: none;
  height: 26px;
  padding: 0 3px;
  font-family: "Open Sans", "Noto Sans CJK SC", sans-serif;
  white-space: nowrap;
}

.info-bar {
  height: 30px;
  padding-bottom: 2px;
}

.steel-bar button {
  height: 22px;
  padding: 0 4px;
  border: 1px solid transparent;
}

.steel-bar .on {
  border-color: #0078d7;
  background: #dcebf7;
}

.steel-bar button:disabled {
  color: #888;
}

.steel-bar .sep {
  margin: 0 3px;
}

.grip {
  width: 2px;
  height: 14px;
  margin-right: 2px;
  background: repeating-linear-gradient(#b4b4b4 0 2px, transparent 2px 4px);
}

.info-bar .grip {
  margin-right: 6px;
}

#steel {
  width: 135px;
  height: 26px;
  padding-left: 4px;
  border: 1px solid #0078d7;
  background: linear-gradient(to right, #fff 121px, #dcebf7 121px);
}

.canvas {
  flex: 1;
  min-height: 0;
  border: 2px solid #f00;
  background: #000;
}

.canvas svg {
  display: block;
  width: 100%;
  height: 100%;
  fill: none;
}

.grid {
  stroke: #3a3a3a;
  stroke-dasharray: 12 4 4 4;
}

.grid .axis {
  stroke: #666;
}

.outline {
  stroke: #fff;
  stroke-width: 2;
}

.dash {
  stroke: #0ff;
  stroke-dasharray: 4 3;
}

.stirrup {
  stroke: #f00;
  stroke-width: 3;
}

.dims {
  stroke: #0f0;
}

.nums {
  fill: #fff;
  font: 11px "Liberation Sans", "Noto Sans CJK SC", sans-serif;
}

.nums .zero {
  fill: #444;
}

.spec {
  fill: #0f0;
  font: 10px "Liberation Mono", monospace;
}

.marks {
  position: absolute;
  left: -1px;
  top: -1px;
  width: 240px;
  height: 110px;
  pointer-events: none;
  fill: none;
  stroke: #f00;
  stroke-width: 6;
}

.dialog-status {
  flex: none;
  height: 24px;
  display: flex;
  gap: 2px;
  padding-top: 3px;
  background: #f0f0f0;
}

.dialog-status span, .statusbar span {
  padding: 1px 2px;
  border: 1px solid #d5d5d5;
  background: linear-gradient(#fcfcfc, #f0f0f0);
  white-space: nowrap;
}

.dialog-status span:first-child {
  width: 148px;
  padding-left: 8px;
  font-family: "Liberation Mono", monospace;
  font-size: 10px;
}

.dialog-status span:last-child {
  flex: 1;
}

/* status bar */
.statusbar {
  flex: none;
  height: 21px;
  display: grid;
  grid-template-columns: 148px 78px 98px 48px 1fr 71px;
  gap: 2px;
  font-family: "Liberation Serif", "Noto Sans CJK SC", serif;
}

/* taskbar */
.taskbar {
  flex: none;
  height: 40px;
  display: flex;
  align-items: center;
  background: #020a0e;
  color: #fff;
  text-align: center;
  white-space: nowrap;
}

.start {
  width: 48px;
  height: 40px;
  background: #000;
}

.start svg {
  width: 16px;
  height: 16px;
  vertical-align: middle;
}

.cortana {
  width: 344px;
  height: 40px;
  display: flex;
  align-items: center;
  gap: 5px;
  padding: 0 12px 0 9px;
  background: #333;
  font-size: 14px;
}

.circle {
  width: 22px;
  height: 22px;
  border: 3px solid #eee;
  border-radius: 50%;
}

.cortana input {
  flex: 1;
  min-width: 0;
}

.cortana input::placeholder {
  color: #9a9a9a;
  opacity: 1;
}

.cortana svg {
  width: 16px;
  height: 18px;
}

.task {
  width: 49px;
  height: 40px;
  margin-right: 2px;
  display: flex;
  align-items: center;
  justify-content: center;
  border-bottom: 2px solid transparent;
}

.task svg {
  width: 24px;
  height: 24px;
}

.task.run {
  width: 40px;
  margin: 0 4px;
  border-bottom-color: #76b9ed;
}

.explorer + .run {
  margin-left: 0;
}

.task.active {
  width: 48px;
  margin: 0;
  background: #343c40;
}

.task:has(+ .run):not(.run) {
  margin-right: -3px;
}

.links {
  margin-left: 12px;
}

.cpu {
  width: 48px;
  margin-left: 20px;
}

.cpu, .clock {
  line-height: 18px;
}

.tray {
  flex: 1;
  display: flex;
  align-items: center;
  justify-content: space-between;
  padding: 0 18px;
}

.tray svg {
  width: 16px;
  height: 16px;
}

.tray .kb {
  width: 24px;
}

.clock {
  width: 60px;
}

.notes {
  position: relative;
  width: 32px;
  height: 32px;
  margin: 0 10px 0 18px;
}

.notes svg {
  display: block;
  width: 24px;
  height: 24px;
}

.notes b {
  position: absolute;
  right: 4px;
  bottom: 2px;
  width: 16px;
  height: 16px;
  border-radius: 50%;
  background: #444;
}
```
